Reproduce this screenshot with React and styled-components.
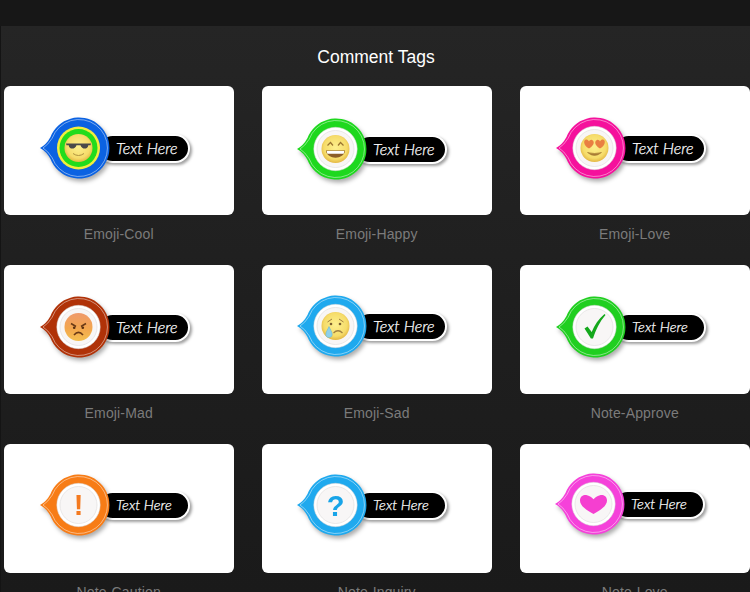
import React from "react";
import styled, { createGlobalStyle } from "styled-components";

const Global = createGlobalStyle`
  html, body { margin: 0; padding: 0; background: #1b1b1b; }
  body { width: 750px; height: 592px; overflow: hidden; }
`;

const Page = styled.div`
  width: 750px;
  height: 592px;
  overflow: hidden;
  background: linear-gradient(#252525 26px, #1f1f1f 300px, #1a1a1a 592px);
  box-shadow: inset 1px 0 #141414;
  font-family: "Liberation Sans", Arial, sans-serif;
`;
const TopBar = styled.div`
  height: 26px;
  background: #171717;
`;
const Title = styled.h1`
  margin: 0;
  height: 60px;
  display: flex;
  align-items: center;
  justify-content: center;
  padding: 2px 0 0 2px;
  box-sizing: border-box;
  color: #fff;
  font-size: 17.5px;
  font-weight: 400;
`;
const Grid = styled.div`
  display: grid;
  grid-template-columns: repeat(3, 229.5px);
  grid-auto-rows: 179px;
  column-gap: 28.5px;
  padding-left: 4px;
`;
const Item = styled.div`
  display: flex;
  flex-direction: column;
  align-items: center;
`;
const Card = styled.div`
  width: 229.5px;
  height: 129px;
  flex: none;
  box-sizing: border-box;
  padding: ${(p) => p.$top}px 0 0 ${(p) => p.$left}px;
  background: #fff;
  border-radius: 6px;
`;
const Label = styled.div`
  margin: 11px 0 0 0;
  color: #7b7b7b;
  font-size: 14px;
  line-height: 16px;
  letter-spacing: 0.15px;
`;
const Tag = styled.div`
  display: flex;
  align-items: center;
  width: 151px;
`;
const Bubble = styled.svg`
  flex: none;
  position: relative;
  z-index: 1;
  width: 69px;
  height: 62px;
  overflow: visible;
  filter: drop-shadow(2px 3px 2px rgba(0, 0, 0, 0.32));
`;
const Pill = styled.div`
  flex: none;
  width: 92px;
  height: 29px;
  margin-left: -10px;
  display: flex;
  align-items: center;
  box-sizing: border-box;
  padding: 0 0 2px ${(p) => p.$inset}px;
  border: 2px solid #fff;
  border-radius: 15px;
  background: #000;
  box-shadow: 2px 2px 3px rgba(0, 0, 0, 0.38);
  color: #fff;
  font-family: Lato, "Liberation Sans", sans-serif;
  font-style: italic;
  font-weight: 300;
  font-size: ${(p) => p.$size}px;
  -webkit-text-stroke: 0.25px #fff;
  white-space: nowrap;
`;

const FaceDefs = () => (
  <defs>
    <radialGradient id="sun" cx="50%" cy="45%" r="55%">
      <stop offset="0%" stopColor="#fdf08e" />
      <stop offset="75%" stopColor="#f6dc6a" />
      <stop offset="100%" stopColor="#e4b843" />
    </radialGradient>
    <linearGradient id="rage" x1="0" y1="0" x2="0" y2="1">
      <stop offset="0%" stopColor="#ef9a6c" />
      <stop offset="55%" stopColor="#f3a64e" />
      <stop offset="100%" stopColor="#f4c050" />
    </linearGradient>
  </defs>
);

const Plate = ({ cool }) =>
  cool ? (
    <>
      <circle r="21.5" fill="#f3ee3e" />
      <circle r="19" fill="#22dc1c" />
    </>
  ) : (
    <>
      <circle r="21.7" fill="#fff" stroke="#d8d6d6" strokeWidth="0.5" />
      <circle r="18.5" fill="#f8f6f6" stroke="#e4e2e2" strokeWidth="0.8" />
    </>
  );

const Cool = () => (
  <>
    <Plate cool />
    <circle r="14" fill="url(#sun)" />
    <path d="M-12.5 -4.5H12.5L12 -2.8H9.8C9.5 1.5 3.5 2 2 -2.8H-2C-3.5 2 -9.5 1.5 -9.8 -2.8H-12Z" fill="#4a4a4a" />
    <path d="M-5.5 5.5Q0 9.5 5.5 5.5" fill="none" stroke="#b09440" strokeWidth="1" />
  </>
);
const Happy = () => (
  <>
    <Plate />
    <circle r="14" fill="url(#sun)" />
    <path d="M-8 -3.5L-5 -6.5L-2.5 -3.5M2.5 -3.5L5 -6.5L8 -3.5" fill="none" stroke="#9a7430" strokeWidth="1.2" />
    <path d="M-9.5 1.5H9.5C9 11 -9 11 -9.5 1.5Z" fill="#8c5e28" />
    <path d="M-8.8 2H8.8L8.2 4.8H-8.2Z" fill="#fff" />
  </>
);
const Love = () => (
  <>
    <Plate />
    <circle r="14" fill="url(#sun)" />
    <path d="M-5.5 0.5C-12 -3 -11 -9 -8 -8.5C-6.5 -8.3 -5.5 -7 -5.5 -6.5C-5 -7.5 -3.8 -8.5 -2.5 -8C0 -7 0.5 -3 -5.5 0.5Z" fill="#e97f42" />
    <path d="M5.5 0.5C-0.5 -3 0 -7 2.5 -8C3.8 -8.5 5 -7.5 5.5 -6.5C5.5 -7 6.5 -8.3 8 -8.5C11 -9 12 -3 5.5 0.5Z" fill="#e97f42" />
    <path d="M-7 4.5Q0 10.5 7 4.5Q0 6.5 -7 4.5Z" fill="#a87c34" stroke="#a87c34" strokeWidth="0.6" />
  </>
);
const Mad = () => (
  <>
    <Plate />
    <circle r="14" fill="url(#rage)" />
    <path d="M-7.5 -3.5L-2.5 -0.5M7.5 -3.5L2.5 -0.5" stroke="#6a3a16" strokeWidth="1.5" />
    <circle cx="-4.3" cy="0.8" r="1.3" fill="#5a3012" />
    <circle cx="4.3" cy="0.8" r="1.3" fill="#5a3012" />
    <path d="M-4.5 8Q0 2.8 4.5 8" fill="none" stroke="#6a3a16" strokeWidth="1.6" />
  </>
);
const Sad = () => (
  <>
    <Plate />
    <circle r="14" fill="url(#sun)" />
    <path d="M-8 -4L-3.5 -7M8 -4L3.5 -7" stroke="#a08040" strokeWidth="1" />
    <circle cx="-4.5" cy="-2" r="1.3" fill="#7c6030" />
    <circle cx="4.5" cy="-2" r="1.3" fill="#7c6030" />
    <path d="M-2 7Q2.5 2.5 7 7" fill="none" stroke="#a08040" strokeWidth="1.2" />
    <path d="M-6.5 0.5C-5 4 -3.3 6 -3.3 8.5C-3.3 12.5 -9.7 12.5 -9.7 8.5C-9.7 6 -8 4 -6.5 0.5Z" fill="#8ed0ea" stroke="#5bb2d8" strokeWidth="0.5" />
  </>
);
const Approve = () => (
  <>
    <Plate />
    <path d="M-10 1.5L-7 -0.5L-2.8 5C0 -2 4 -8 10 -13L11 -12C5 -5 1.5 2.5 -1.5 11.5H-3.6Z" fill="#14a81c" />
  </>
);
const Glyph = styled.text`
  font-family: "Liberation Sans", Arial, sans-serif;
  font-weight: 700;
  text-anchor: middle;
`;
const Caution = () => (
  <>
    <Plate />
    <Glyph y="10" fontSize="29" fill="#f47a20">!</Glyph>
  </>
);
const Inquiry = () => (
  <>
    <Plate />
    <Glyph y="10.5" fontSize="29" fill="#18a4e8">?</Glyph>
  </>
);
const NoteLove = () => (
  <>
    <Plate />
    <path d="M0 10C-7 6 -13.5 2 -13.5 -3.5C-13.5 -8 -9.5 -9.5 -6.5 -8.8C-3.5 -8.2 -1 -6 0 -4.8C1 -6 3.5 -8.2 6.5 -8.8C9.5 -9.5 13.5 -8 13.5 -3.5C13.5 2 7 6 0 10Z" fill="#f53fd0" />
  </>
);

const OUTLINE = "M1 31Q7.5 27.5 11.5 20A30.5 30.5 0 1 1 11.5 42Q7.5 34.5 1 31Z";
const STITCH = "M4 31Q9 28 13.2 21.2A28.5 28.5 0 1 1 13.2 40.8Q9 34 4 31Z";

const TagMark = ({ color, children }) => (
  <Bubble viewBox="0 0 69 62">
    <FaceDefs />
    <path d={OUTLINE} fill={color} />
    <path d={STITCH} fill="none" stroke="#fff" strokeOpacity="0.65" strokeWidth="0.7" />
    <g transform="translate(39.5 31)">{children}</g>
  </Bubble>
);

const items = [
  { name: "Emoji-Cool", color: "#0b62e2", art: Cool, left: 35, top: 31, size: 16, inset: 16 },
  { name: "Emoji-Happy", color: "#1ed81e", art: Happy, left: 34, top: 32, size: 16, inset: 16 },
  { name: "Emoji-Love", color: "#f5119c", art: Love, left: 35, top: 31, size: 16, inset: 16 },
  { name: "Emoji-Mad", color: "#b03208", art: Mad, left: 35, top: 31, size: 16, inset: 16 },
  { name: "Emoji-Sad", color: "#1fa9ee", art: Sad, left: 34, top: 30, size: 16, inset: 16 },
  { name: "Note-Approve", color: "#20cf20", art: Approve, left: 35, top: 31, size: 14.5, inset: 16 },
  { name: "Note-Caution", color: "#f77c16", art: Caution, left: 35, top: 30, size: 14.5, inset: 16 },
  { name: "Note-Inquiry", color: "#1fa9ee", art: Inquiry, left: 34, top: 30, size: 14.5, inset: 16 },
  { name: "Note-Love", color: "#f541da", art: NoteLove, left: 34, top: 29, size: 14.5, inset: 16 },
];

export default function App() {
  return (
    <Page>
      <Global />
      <TopBar />
      <Title>Comment Tags</Title>
      <Grid>
        {items.map(({ name, color, art: Art, left, top, size, inset }) => (
          <Item key={name}>
            <Card $left={left} $top={top}>
              <Tag>
                <TagMark color={color}>
                  <Art />
                </TagMark>
                <Pill $size={size} $inset={inset}>Text Here</Pill>
              </Tag>
            </Card>
            <Label>{name}</Label>
          </Item>
        ))}
      </Grid>
    </Page>
  );
}
